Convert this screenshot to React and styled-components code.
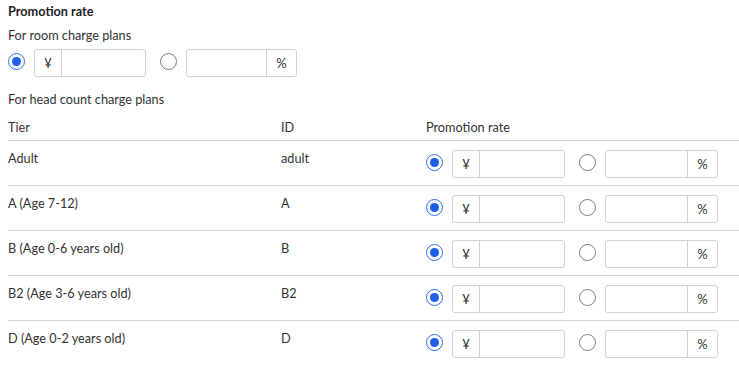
import React from "react";
import styled, { createGlobalStyle } from "styled-components";

const Global = createGlobalStyle`
  html, body { margin: 0; padding: 0; background: #fff; }
  body { font-family: "Lato", "Noto Sans", sans-serif; color: #333; font-size: 12.7px; }
`;

const Page = styled.div`
  padding: 2px 0 0 8px;
`;

const Title = styled.div`
  font-weight: 700;
  font-size: 12.7px;
  line-height: 18px;
  color: #222;
`;

const Label = styled.div`
  font-size: 12.7px;
  line-height: 18px;
  margin-top: ${(p) => p.$mt || 0}px;
`;

const OptionRow = styled.div`
  display: flex;
  align-items: center;
  margin-top: ${(p) => p.$mt || 0}px;
`;

const RadioWrap = styled.span`
  display: inline-flex;
  align-items: center;
  justify-content: center;
  box-sizing: border-box;
  width: 17px;
  height: 17px;
  border-radius: 50%;
  border: 1px solid ${(p) => (p.$checked ? "#2f6bf0" : "#7a7a7a")};
  background: #fff;
  margin-right: 9px;
  margin-bottom: 3px;
  flex: none;
`;

const Dot = styled.span`
  width: 9px;
  height: 9px;
  border-radius: 50%;
  background: #1f5fe8;
`;

const Group = styled.div`
  display: flex;
  box-sizing: border-box;
  width: ${(p) => p.$w}px;
  height: 28px;
  border: 1px solid #cfd3d9;
  border-radius: 3px;
  background: #fff;
  margin-right: ${(p) => p.$mr || 0}px;
  flex: none;
`;

const Addon = styled.span`
  display: flex;
  align-items: center;
  justify-content: center;
  width: ${(p) => p.$w}px;
  flex: none;
  font-size: 13px;
  color: #333;
  ${(p) => (p.$side === "left" ? "border-right: 1px solid #cfd3d9;" : "border-left: 1px solid #cfd3d9;")}
`;

const Field = styled.span`
  flex: 1;
`;

const Table = styled.div`
  margin-top: 10px;
`;

const Row = styled.div`
  display: grid;
  grid-template-columns: 273px 145px 1fr;
  border-bottom: ${(p) => (p.$last ? "none" : "1px solid #d3d3d3")};
  height: ${(p) => p.$h}px;
  box-sizing: border-box;
`;

const Cell = styled.div`
  font-size: 12.7px;
  line-height: 18px;
  padding-top: ${(p) => p.$pt || 0}px;
`;

const RatesCell = styled.div`
  padding-top: 9px;
`;

function Radio({ checked }) {
  return <RadioWrap $checked={checked}>{checked && <Dot />}</RadioWrap>;
}

function Rates({ w1, w2, gap }) {
  return (
    <OptionRow>
      <Radio checked />
      <Group $w={w1} $mr={gap}>
        <Addon $side="left" $w={26}>¥</Addon>
        <Field />
      </Group>
      <Radio />
      <Group $w={w2}>
        <Field />
        <Addon $side="right" $w={29}>%</Addon>
      </Group>
    </OptionRow>
  );
}

const rows = [
  ["Adult", "adult"],
  ["A (Age 7-12)", "A"],
  ["B (Age 0-6 years old)", "B"],
  ["B2 (Age 3-6 years old)", "B2"],
  ["D (Age 0-2 years old)", "D"],
];

export default function App() {
  return (
    <Page>
      <Global />
      <Title>Promotion rate</Title>
      <Label $mt={6}>For room charge plans</Label>
      <OptionRow $mt={5}>
        <Radio checked />
        <Group $w={112} $mr={14}>
          <Addon $side="left" $w={26}>¥</Addon>
          <Field />
        </Group>
        <Radio />
        <Group $w={111}>
          <Field />
          <Addon $side="right" $w={29}>%</Addon>
        </Group>
      </OptionRow>
      <Label $mt={13}>For head count charge plans</Label>
      <Table>
        <Row $h={23}>
          <Cell>Tier</Cell>
          <Cell>ID</Cell>
          <Cell>Promotion rate</Cell>
        </Row>
        {rows.map(([tier, id], i) => (
          <Row key={id} $h={45} $last={i === rows.length - 1}>
            <Cell $pt={8}>{tier}</Cell>
            <Cell $pt={8}>{id}</Cell>
            <RatesCell>
              <Rates w1={113} w2={113} gap={14} />
            </RatesCell>
          </Row>
        ))}
      </Table>
    </Page>
  );
}
